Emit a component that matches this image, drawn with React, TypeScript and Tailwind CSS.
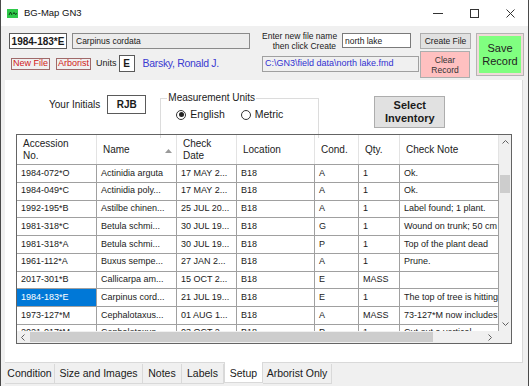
import { useState } from "react";

const cols = [80, 80, 60, 78, 44, 41, 99];

const rows = [
    ["1984-072*O", "Actinidia arguta", "17 MAY 2...", "B18", "A", "1", "Ok."],
    ["1984-049*C", "Actinidia poly...", "17 MAY 2...", "B18", "A", "1", "Ok."],
    ["1992-195*B", "Astilbe chinen...", "25 JUL 20...", "B18", "A", "1", "Label found; 1 plant."],
    ["1981-318*C", "Betula schmi...", "30 JUL 19...", "B18", "G", "1", "Wound on trunk; 50 cm"],
    ["1981-318*A", "Betula schmi...", "30 JUL 19...", "B18", "P", "1", "Top of the plant dead"],
    ["1961-112*A", "Buxus sempe...", "27 JAN 2...", "B18", "A", "1", "Prune."],
    ["2017-301*B", "Callicarpa am...", "15 OCT 2...", "B18", "E", "MASS", ""],
    ["1984-183*E", "Carpinus cord...", "21 JUL 19...", "B18", "E", "1", "The top of tree is hitting"],
    ["1973-127*M", "Cephalotaxus...", "01 AUG 1...", "B18", "A", "MASS", "73-127*M now includes"],
    ["2021-017*M", "Cephalotaxus...", "03 OCT 2...", "B18", "P", "1", "Cut out a vertical"],
];

const tabs = [
    { label: "Condition", w: 50 },
    { label: "Size and Images", w: 88 },
    { label: "Notes", w: 39 },
    { label: "Labels", w: 42 },
    { label: "Setup", w: 39 },
    { label: "Arborist Only", w: 69 },
];

const Radio = ({ checked, label, onClick }: { checked: boolean; label: string; onClick: () => void }) => (
    <div className="flex items-center cursor-default" onClick={onClick}>
        <div className="w-[10px] h-[10px] rounded-full border border-[#333] bg-white flex items-center justify-center">
            {checked && <div className="w-[5px] h-[5px] rounded-full bg-[#222]" />}
        </div>
        <span className="ml-[4px] text-[10.5px]">{label}</span>
    </div>
);

const App = () => {
    const [units, setUnits] = useState("English");
    const [fileName, setFileName] = useState("north lake");
    const [selected, setSelected] = useState(7);

    return (
        <div className="w-[529px] h-[386px] flex flex-col bg-[#f0f0f0] border-x border-[#4a4a4a] overflow-hidden font-['Liberation_Sans',Arial,sans-serif] text-[#1a1a1a]">
            {/* title bar */}
            <div className="h-[26px] shrink-0 bg-white flex items-center">
                <svg width="11" height="9" viewBox="0 0 11 9" className="ml-[6px]">
                    <rect width="11" height="9" fill="#2fc94a" />
                    <path d="M2 6 L3.5 3 L5 6 M6 5 L7 3.5 L8 5 M8.5 6 L9.5 4" stroke="#0d3b14" strokeWidth="1" fill="none" />
                </svg>
                <span className="ml-[6px] text-[9.5px] text-[#111]">BG-Map GN3</span>
                <div className="ml-auto flex h-full">
                    <div className="w-[36px] flex items-center justify-center">
                        <div className="w-[10px] h-px bg-[#333]" />
                    </div>
                    <div className="w-[36px] flex items-center justify-center">
                        <div className="w-[9px] h-[9px] border border-[#333]" />
                    </div>
                    <div className="w-[36px] flex items-center justify-center">
                        <svg width="9" height="9" viewBox="0 0 9 9">
                            <path d="M0.5 0.5 L8.5 8.5 M8.5 0.5 L0.5 8.5" stroke="#333" strokeWidth="1" />
                        </svg>
                    </div>
                </div>
            </div>

            {/* top form */}
            <div className="h-[54px] shrink-0 flex pt-[7px] pl-[8px]">
                <div className="w-[241px] flex flex-col">
                    <div className="flex gap-[5px] h-[16px]">
                        <div className="w-[58px] h-[16px] bg-white border border-[#5a5a5a] flex items-center justify-center text-[10px] font-bold">
                            1984-183*E
                        </div>
                        <div className="w-[178px] h-[16px] bg-[#ececec] border border-[#8a8a8a] flex items-center pl-[3px] text-[8.5px]">
                            Carpinus cordata
                        </div>
                    </div>
                    <div className="flex items-center h-[17px] mt-[6px]">
                        <button className="ml-[2px] w-[39px] h-[12px] border border-[#a06a6a] text-[#d01818] text-[9px] leading-none">
                            New File
                        </button>
                        <button className="ml-[6px] w-[35px] h-[12px] border border-[#a06a6a] text-[#d01818] text-[9px] leading-none">
                            Arborist
                        </button>
                        <span className="ml-[5px] text-[9px]">Units</span>
                        <div className="ml-[2px] w-[16px] h-[17px] bg-white border border-[#5a5a5a] flex items-center justify-center text-[10px] font-bold">
                            E
                        </div>
                        <span className="ml-[8px] text-[10.5px] text-[#3a3ad0] tracking-[-0.3px]">Barsky, Ronald J.</span>
                    </div>
                </div>

                <div className="ml-[12px] w-[157px] flex flex-col">
                    <div className="flex items-start h-[16px]">
                        <div className="w-[74px] text-right text-[8.5px] leading-[10px] -mt-[2px] whitespace-nowrap">
                            Enter new file name
                            <br />
                            then click Create
                        </div>
                        <input
                            value={fileName}
                            onChange={(e) => setFileName(e.target.value)}
                            className="ml-[6px] w-[69px] h-[15px] bg-white border border-[#7a7a7a] text-[8.5px] pl-[2px] outline-none"
                        />
                    </div>
                    <div className="mt-[7px] w-[157px] h-[16px] border border-[#a0a0a0] flex items-center pl-[2px] text-[9px] text-[#3030d0] whitespace-nowrap overflow-hidden">
                        C:\GN3\field data\{fileName}.fmd
                    </div>
                </div>

                <div className="ml-[1px] w-[51px] flex flex-col">
                    <button className="w-[51px] h-[16px] bg-[#e1e1e1] border border-[#adadad] text-[8.5px] leading-none">
                        Create File
                    </button>
                    <button className="mt-[2px] w-[50px] h-[27px] bg-[#ffc0c0] border border-[#adadad] text-[8.5px] leading-[10px] text-[#333]">
                        Clear
                        <br />
                        Record
                    </button>
                </div>

                <div className="ml-[5px] w-[48px] h-[43px] border border-[#b4b4b4] bg-[#f0dada] p-[2px]">
                    <button className="w-full h-full bg-[#80ff80] text-[11px] leading-[13px] text-[#222]">
                        Save
                        <br />
                        Record
                    </button>
                </div>
            </div>

            {/* tab page */}
            <div className="ml-[4px] w-[518px] h-[283px] shrink-0 bg-white border-r border-b border-[#d9d9d9] flex flex-col">
                <div className="h-[54px] shrink-0 flex items-start">
                    <div className="ml-[44px] mt-[15px] flex items-center">
                        <span className="text-[10px]">Your Initials</span>
                        <div className="ml-[7px] w-[39px] h-[19px] border border-[#5a5a5a] flex items-center justify-center text-[10px] font-bold">
                            RJB
                        </div>
                    </div>

                    <div className="ml-[14px] mt-[18px] w-[159px] h-[40px] border border-[#dcdcdc] border-b-0 flex flex-col">
                        <div className="ml-[6px] -mt-[7px] px-px self-start bg-white text-[10px] leading-[12px]">
                            Measurement Units
                        </div>
                        <div className="flex items-center mt-[3px] ml-[15px]">
                            <Radio checked={units === "English"} label="English" onClick={() => setUnits("English")} />
                            <div className="ml-[16px]">
                                <Radio checked={units === "Metric"} label="Metric" onClick={() => setUnits("Metric")} />
                            </div>
                        </div>
                    </div>

                    <button className="ml-[55px] mt-[16px] w-[71px] h-[32px] bg-[#e1e1e1] border border-[#adadad] text-[11px] font-bold leading-[13px]">
                        Select
                        <br />
                        Inventory
                    </button>
                </div>

                {/* grid */}
                <div className="ml-[11px] w-[496px] h-[210px] border border-[#646464] flex flex-col">
                    <div className="flex h-[196px]">
                        <div className="w-[482px] overflow-hidden flex flex-col">
                            <div className="flex h-[30px] shrink-0 border-b border-[#a0a0a0] text-[10px] text-[#222]">
                                {["Accession|No.", "Name", "Check|Date", "Location", "Cond.", "Qty.", "Check Note"].map((h, i) => (
                                    <div
                                        key={h}
                                        style={{ width: cols[i] }}
                                        className="shrink-0 border-r border-[#e3e3e3] flex items-center pl-[6px] leading-[12px] relative"
                                    >
                                        <div>
                                            {h.split("|").map((p) => (
                                                <div key={p}>{p}</div>
                                            ))}
                                        </div>
                                        {h === "Name" && (
                                            <svg width="7" height="4" viewBox="0 0 7 4" className="absolute right-[4px] top-[14px]">
                                                <path d="M0 4 L3.5 0 L7 4 Z" fill="#9a9a9a" />
                                            </svg>
                                        )}
                                    </div>
                                ))}
                            </div>
                            {rows.map((r, ri) => (
                                <div key={ri} className="flex h-[17.75px] shrink-0 text-[9px]" onClick={() => setSelected(ri)}>
                                    {r.map((c, ci) => (
                                        <div
                                            key={ci}
                                            style={{ width: cols[ci] }}
                                            className={
                                                "shrink-0 border-r border-b border-[#a0a0a0] flex items-center pl-[4px] whitespace-nowrap overflow-hidden " +
                                                (ci === 0 && ri === selected ? "bg-[#0078d7] text-white" : "")
                                            }
                                        >
                                            {c}
                                        </div>
                                    ))}
                                </div>
                            ))}
                        </div>
                        <div className="w-[12px] bg-[#f0f0f0] flex flex-col items-center">
                            <svg width="7" height="4" viewBox="0 0 7 4" className="mt-[5px]">
                                <path d="M0.5 3.5 L3.5 0.5 L6.5 3.5" stroke="#606060" fill="none" />
                            </svg>
                            <div className="mt-[31px] w-[10px] h-[18px] bg-[#cdcdcd]" />
                            <svg width="7" height="4" viewBox="0 0 7 4" className="mt-auto mb-[5px]">
                                <path d="M0.5 0.5 L3.5 3.5 L6.5 0.5" stroke="#606060" fill="none" />
                            </svg>
                        </div>
                    </div>
                    <div className="flex h-[12px]">
                        <div className="w-[482px] bg-[#f0f0f0] flex items-center">
                            <svg width="4" height="7" viewBox="0 0 4 7" className="ml-[4px]">
                                <path d="M3.5 0.5 L0.5 3.5 L3.5 6.5" stroke="#606060" fill="none" />
                            </svg>
                            <div className="ml-[5px] w-[403px] h-[10px] bg-[#cdcdcd]" />
                            <svg width="4" height="7" viewBox="0 0 4 7" className="ml-auto mr-[7px]">
                                <path d="M0.5 0.5 L3.5 3.5 L0.5 6.5" stroke="#606060" fill="none" />
                            </svg>
                        </div>
                        <div className="w-[12px] bg-[#f0f0f0]" />
                    </div>
                </div>
            </div>

            {/* tabs */}
            <div className="flex ml-[4px] h-[23px]">
                {tabs.map((t) =>
                    t.label === "Setup" ? (
                        <div
                            key={t.label}
                            style={{ width: t.w }}
                            className="h-[21px] -mt-px bg-white border-x border-b border-[#d9d9d9] flex items-center justify-center pt-[3px] text-[10.5px]"
                        >
                            {t.label}
                        </div>
                    ) : (
                        <div
                            key={t.label}
                            style={{ width: t.w }}
                            className="h-[20px] mt-[1px] border-r border-b border-[#d9d9d9] flex items-center justify-center text-[10.5px]"
                        >
                            {t.label}
                        </div>
                    )
                )}
            </div>
        </div>
    );
};

export default App;
